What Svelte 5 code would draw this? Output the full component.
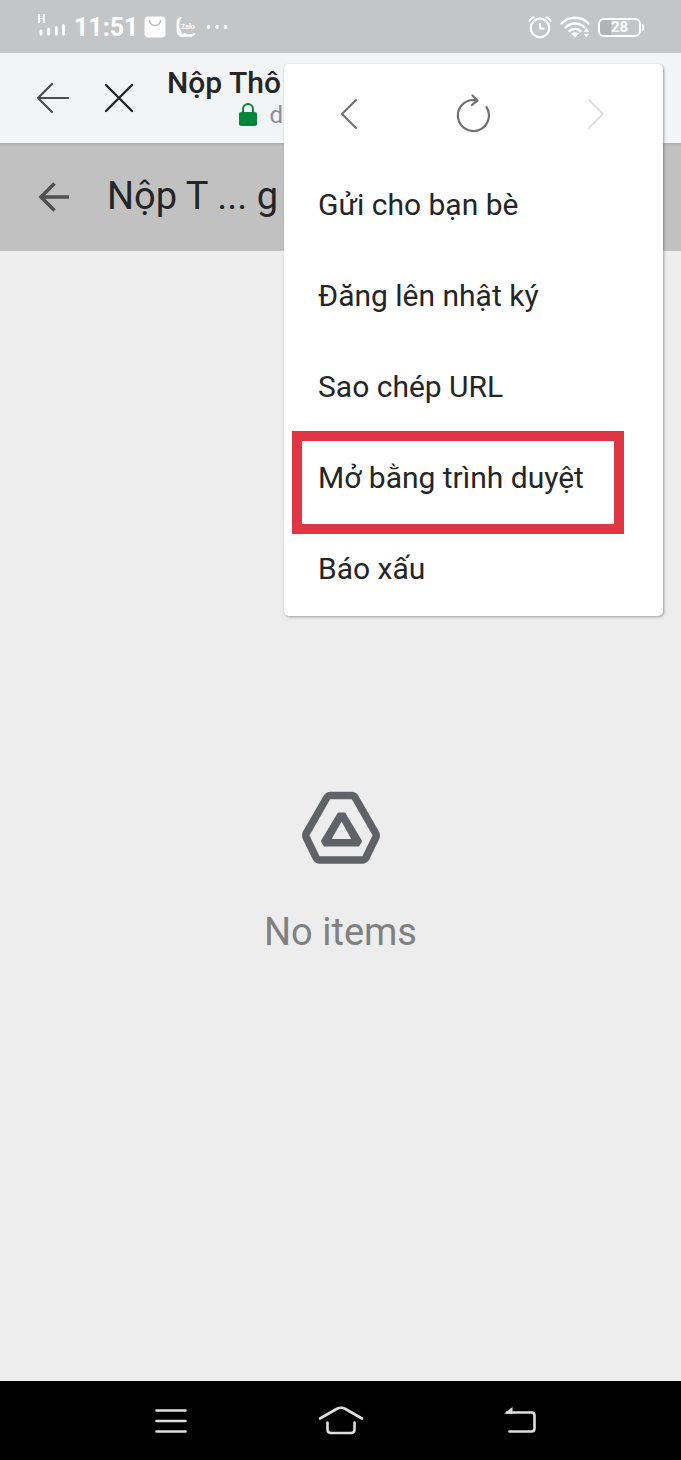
<script>
  const items = [
    { label: 'Gửi cho bạn bè' },
    { label: 'Đăng lên nhật ký' },
    { label: 'Sao chép URL' },
    { label: 'Mở bằng trình duyệt', marked: true },
    { label: 'Báo xấu' }
  ];
</script>

<div class="screen">
  <div class="status">
    <div class="group">
      <svg width="28" height="32" viewBox="0 0 28 32" aria-hidden="true">
        <path d="M2 3v9M7 3v9M2 7.500h5" fill="none" stroke="#fff" stroke-width="1.600" />
        <path d="M4 20v3M11.700 18v5M19.300 16.500v6.500M26.500 14.500v8.500" fill="none" stroke="#fff" stroke-width="3" stroke-linecap="round" />
      </svg>
      <time>11:51</time>
      <svg width="22" height="22" viewBox="0 0 22 22" aria-hidden="true">
        <rect x="0.500" y="0.500" width="21" height="21" rx="4" fill="#fff" />
        <path d="M5.500 4.500a5.500 5 0 0 0 11 0" fill="none" stroke="#bcbdc0" stroke-width="1.500" stroke-linecap="round" />
      </svg>
      <svg class="zalo" width="22" height="22" viewBox="0 0 22 22" aria-hidden="true">
        <path d="M6.500 1.500C3 1.500 2 3 2 6.500v8c0 4 2 6 6 6h7c3 0 4.500-1 5-3-4 1.500-8 1.500-11 0-1 .800-2 1.200-3.500 1 1-.800 1.200-1.800.700-2.800C3 12 3 5.500 6.500 1.500z" fill="#fff" stroke="#fff" stroke-width=".8" stroke-linejoin="round" />
        <text x="6" y="12.500" font-size="7" font-weight="700" fill="#fff">Zalo</text>
      </svg>
      <svg width="22" height="22" viewBox="0 0 22 22" aria-hidden="true">
        <g fill="#fff"><circle cx="2.500" cy="11" r="1.900" /><circle cx="11" cy="11" r="1.900" /><circle cx="19.500" cy="11" r="1.900" /></g>
      </svg>
    </div>
    <div class="group right">
      <svg width="24" height="24" viewBox="0 0 24 24" aria-hidden="true">
        <circle cx="12" cy="13" r="9.300" fill="none" stroke="#fff" stroke-width="2.200" />
        <path d="M12 8v5.500h4.500" fill="none" stroke="#fff" stroke-width="1.800" />
        <path d="M1 6.500C1.500 3.500 3.500 1.800 6.500 2zM23 6.500C22.500 3.500 20.500 1.800 17.500 2z" fill="#fff" stroke="#fff" stroke-width="1" stroke-linejoin="round" />
      </svg>
      <svg width="32" height="24" viewBox="0 0 32 24" aria-hidden="true">
        <g fill="none" stroke="#fff" stroke-width="2.500" stroke-linecap="round">
          <path d="M2.500 8.500C10 .800 22 .800 29.500 8.500" />
          <path d="M6.500 12.500c5.500-5.300 13.500-5.300 19 0" />
          <path d="M10.500 16c3.300-2.800 7.700-2.800 11 0" />
        </g>
        <path d="M12 18.500c2.500-1.800 5.500-1.800 8 0L16 22.500zM27.500 13l2.700 3.800h-5.400zM27.500 22.500l2.700-3.800h-5.400z" fill="#fff" />
      </svg>
      <span class="battery">28</span>
    </div>
  </div>

  <header class="browser">
    <button aria-label="Quay lại">
      <svg width="34" height="32" viewBox="0 0 34 32"><path d="M16 2L2 16l14 14M2 16h30" fill="none" stroke="#4b4c4d" stroke-width="2.200" stroke-linecap="round" stroke-linejoin="round" /></svg>
    </button>
    <button class="close" aria-label="Đóng">
      <svg width="30" height="30" viewBox="0 0 30 30"><path d="M2 2l26 26M28 2L2 28" fill="none" stroke="#222325" stroke-width="2.400" stroke-linecap="round" /></svg>
    </button>
    <div class="heading">
      <h1>Nộp Thô</h1>
      <p>
        <svg width="20" height="24" viewBox="0 0 20 24" aria-hidden="true">
          <rect x="1" y="9" width="18" height="14" rx="2" fill="#07873b" />
          <path d="M5 10V6a5 5 0 0 1 10 0v4" fill="none" stroke="#07873b" stroke-width="2" />
        </svg>
        <span>d</span>
      </p>
    </div>
  </header>

  <div class="folder">
    <button aria-label="Trở về">
      <svg width="32" height="32" viewBox="0 0 32 32"><path d="M16.500 2.500L3 16l13.500 13.500M3 16h28" fill="none" stroke="#505050" stroke-width="3.600" /></svg>
    </button>
    <h2>Nộp T ... g</h2>
  </div>

  <main>
    <svg width="80" height="74" viewBox="0 0 80 74" aria-hidden="true">
      <path d="M29.500 4.500h21c1.700 0 2.800.700 3.600 2L74.500 42c1 1.700 1 3.300 0 5L65 66.500c-.800 1.500-2 2.500-3.800 2.500H18.800C17 69 15.800 68 15 66.500L5.500 47c-1-1.700-1-3.300 0-5L25.900 6.500c.800-1.300 1.900-2 3.600-2z" fill="none" stroke="#5f6368" stroke-width="7.500" stroke-linejoin="round" />
      <path d="M37.500 22.500h6L60 50l-2.500 4.500H23.500L21 50z" fill="#5f6368" stroke="#5f6368" stroke-width="2" stroke-linejoin="round" />
      <path d="M40.500 30.500L50.300 48H30.700z" fill="#ededed" />
    </svg>
    <p>No items</p>
  </main>

  <nav class="system">
    <button aria-label="Menu">
      <svg width="46" height="32" viewBox="0 0 46 32"><path d="M8.500 5.500h29M8.500 16h29M8.500 26.500h29" fill="none" stroke="#dedede" stroke-width="2.600" stroke-linecap="round" /></svg>
    </button>
    <button aria-label="Home">
      <svg width="46" height="32" viewBox="0 0 46 32"><path d="M2 13.500L18.500 4q4.500-2.500 9 0L44 13.500M9.500 17.500v7q0 3.500 3.500 3.500h20q3.500 0 3.500-3.500v-7" fill="none" stroke="#dedede" stroke-width="2.600" stroke-linecap="round" /></svg>
    </button>
    <button aria-label="Back">
      <svg width="64" height="32" viewBox="0 0 64 32"><path d="M19 7.500h24.500q3 0 3 3v13q0 3-3 3H21.500" fill="none" stroke="#dedede" stroke-width="2.600" stroke-linecap="round" /><path d="M16 8.700L24.500 2v6.700z" fill="#dedede" /></svg>
    </button>
  </nav>

  <div class="menu">
    <div class="tools">
      <button aria-label="Trang trước">
        <svg width="32" height="40" viewBox="0 0 32 40"><path d="M23 6L9 20l14 14" fill="none" stroke="#6d6d6d" stroke-width="2" stroke-linecap="round" stroke-linejoin="round" /></svg>
      </button>
      <button aria-label="Tải lại">
        <svg width="40" height="40" viewBox="0 0 40 40"><path d="M33.500 13.200A15.500 15.500 0 1 1 20.500 6L24 6.500M19.500 1.500l5 5.200-5.500 4.300" fill="none" stroke="#707070" stroke-width="2.200" stroke-linecap="round" stroke-linejoin="round" /></svg>
      </button>
      <button aria-label="Trang sau" disabled>
        <svg width="32" height="40" viewBox="0 0 32 40"><path d="M9 6l14 14L9 34" fill="none" stroke="#dedede" stroke-width="2" stroke-linecap="round" stroke-linejoin="round" /></svg>
      </button>
    </div>
    <ul>
      {#each items as item}
        <li class:marked={item.marked}><button>{item.label}</button></li>
      {/each}
    </ul>
  </div>
</div>

<style>
  :global(body) {
    margin: 0;
  }
  .screen {
    position: relative;
    display: flex;
    flex-direction: column;
    min-height: 100vh;
    background: #ededed;
    color: #242526;
    font-family: Roboto, sans-serif;
  }
  h1, h2, p, ul {
    margin: 0;
    padding: 0;
  }
  button {
    padding: 0;
    border: 0;
    background: none;
    color: inherit;
    font: inherit;
  }
  svg {
    display: block;
    flex: none;
  }
  .status {
    display: flex;
    align-items: center;
    justify-content: space-between;
    height: 53px;
    padding: 1px 38px 0 37px;
    box-sizing: border-box;
    background: #c4c5c7;
    color: #fff;
  }
  .group {
    display: flex;
    align-items: center;
    gap: 9px;
  }
  .group.right {
    gap: 7px;
  }
  .zalo {
    overflow: visible;
  }
  time {
    width: 61px;
    font-size: 25px;
    font-weight: 700;
    white-space: nowrap;
  }
  .battery {
    position: relative;
    width: 43px;
    height: 19px;
    margin-right: 2px;
    box-sizing: border-box;
    border: 2px solid #fff;
    border-radius: 6px;
    background: linear-gradient(90deg, #b1b2b4 28%, #c4c5c7 28%);
    font-size: 15px;
    font-weight: 700;
    line-height: 15px;
    text-align: center;
  }
  .battery::after {
    content: '';
    position: absolute;
    top: 4px;
    right: -5px;
    width: 2px;
    height: 7px;
    border-radius: 0 2px 2px 0;
    background: #fff;
  }
  .browser {
    display: flex;
    align-items: center;
    height: 90px;
    padding-left: 36px;
    background: #f3f4f6;
  }
  .close {
    margin-left: 34px;
  }
  .heading {
    width: 116px;
    margin-left: 33px;
    overflow: hidden;
    white-space: nowrap;
  }
  h1 {
    font-size: 30px;
    font-weight: 500;
    line-height: 34px;
  }
  .heading p {
    display: flex;
    align-items: center;
    justify-content: flex-end;
    gap: 11px;
    color: #8b8e93;
    font-size: 24px;
    line-height: 30px;
  }
  .folder {
    display: flex;
    align-items: center;
    gap: 37px;
    height: 108px;
    padding-left: 38px;
    background: linear-gradient(#aeaeae, #c1c1c1 4px);
  }
  h2 {
    padding-bottom: 2px;
    font-size: 38px;
    font-weight: 400;
    line-height: 44px;
  }
  main {
    display: flex;
    flex: 1;
    flex-direction: column;
    align-items: center;
    justify-content: center;
    gap: 45px;
    padding-top: 112px;
  }
  main p {
    color: #808080;
    font-size: 38px;
    line-height: 44px;
  }
  .system {
    display: flex;
    align-items: center;
    justify-content: center;
    gap: 124px;
    height: 79px;
    padding-left: 19px;
    background: #000;
  }
  .menu {
    position: absolute;
    top: 64px;
    right: 18px;
    width: 379px;
    border-radius: 5px;
    background: #fff;
    box-shadow: 1px 1px 3px rgba(0, 0, 0, 0.35);
  }
  .tools {
    display: flex;
    align-items: center;
    justify-content: space-between;
    height: 95px;
    padding: 4px 51px 0 49px;
    box-sizing: border-box;
  }
  ul {
    padding-bottom: 2px;
    list-style: none;
  }
  li {
    position: relative;
  }
  li button {
    display: block;
    width: 100%;
    height: 91px;
    padding: 0 34px;
    font-size: 30px;
    text-align: left;
    white-space: nowrap;
  }
  .marked::after {
    content: '';
    position: absolute;
    inset: -1px 39px -11px 8px;
    border: 10px solid #e03644;
    pointer-events: none;
  }
</style>
